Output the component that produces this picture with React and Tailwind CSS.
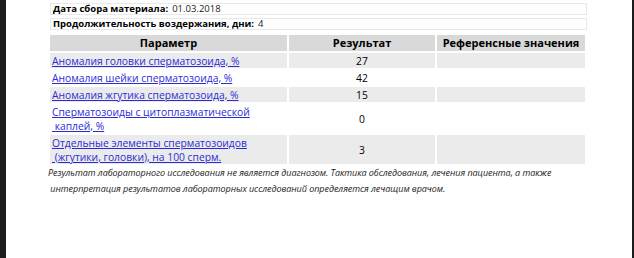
import React from "react";

const rows = [
  { name: ["Аномалия головки сперматозоида, %"], value: "27" },
  { name: ["Аномалия шейки сперматозоида, %"], value: "42" },
  { name: ["Аномалия жгутика сперматозоида, %"], value: "15" },
  { name: ["Сперматозоиды с цитоплазматической", "\u00a0каплей, %"], value: "0" },
  { name: ["Отдельные элементы сперматозоидов", "\u00a0(жгутики, головки), на 100 сперм."], value: "3" },
];

const App = () => {
  return (
    <div className="flex h-[258px] w-[634px] bg-white font-['Open_Sans',sans-serif] text-black">
      <div className="w-[6px] bg-[#1c1c1c]" />

      <div className="flex-1 pl-[42px] pt-[3px]">
        {/* info boxes */}
        <div className="ml-[2px] w-[537px] border border-[#e8e8e8] h-[12px] flex items-center pl-[2px] text-[9.5px] leading-[10px]">
          <span className="font-bold">Дата сбора материала:</span>
          <span className="ml-[4px] text-[#222]">01.03.2018</span>
        </div>
        <div className="ml-[2px] mt-[3px] w-[537px] border border-[#e8e8e8] h-[12px] flex items-center pl-[2px] text-[9.5px] leading-[10px]">
          <span className="font-bold">Продолжительность воздержания, дни:</span>
          <span className="ml-[4px] text-[#222]">4</span>
        </div>

        {/* results table */}
        <table className="mt-[3px] border-separate border-spacing-[2px] text-[10.3px]">
          <thead>
            <tr>
              <th className="w-[237px] h-[16px] bg-[#d9d9d9] p-0 text-center text-[11px] leading-[14px] font-bold">
                Параметр
              </th>
              <th className="w-[146px] h-[16px] bg-[#d9d9d9] p-0 text-center text-[11px] leading-[14px] font-bold">
                Результат
              </th>
              <th className="w-[148px] h-[16px] bg-[#d9d9d9] p-0 text-center text-[11px] leading-[14px] font-bold">
                Референсные значения
              </th>
            </tr>
          </thead>
          <tbody>
            {rows.map((r, i) => (
              <tr key={i} className={i % 2 === 0 ? "bg-[#ebebeb]" : "bg-white"}>
                <td className="p-0 pl-[2px] py-[0.5px] leading-[14px] text-left align-middle">
                  {r.name.map((line, j) => (
                    <div key={j}>
                      <a href="#" className="text-[#2b2bd6] underline decoration-[#2b2bd6]">
                        {line}
                      </a>
                    </div>
                  ))}
                </td>
                <td className="p-0 text-center leading-[14px] align-middle">{r.value}</td>
                <td className="p-0" />
              </tr>
            ))}
          </tbody>
        </table>

        {/* note */}
        <p className="mt-[-1px] text-[9px] italic leading-[16px] tracking-[-0.05px] text-[#222]">
          Результат лабораторного исследования не является диагнозом. Тактика обследования, лечения пациента, а также
          <br />
          {"\u00a0"}интерпретация результатов лабораторных исследований определяется лечащим врачом.
        </p>
      </div>

      <div className="w-[2px] bg-[#1c1c1c]" />
    </div>
  );
};

export default App;
